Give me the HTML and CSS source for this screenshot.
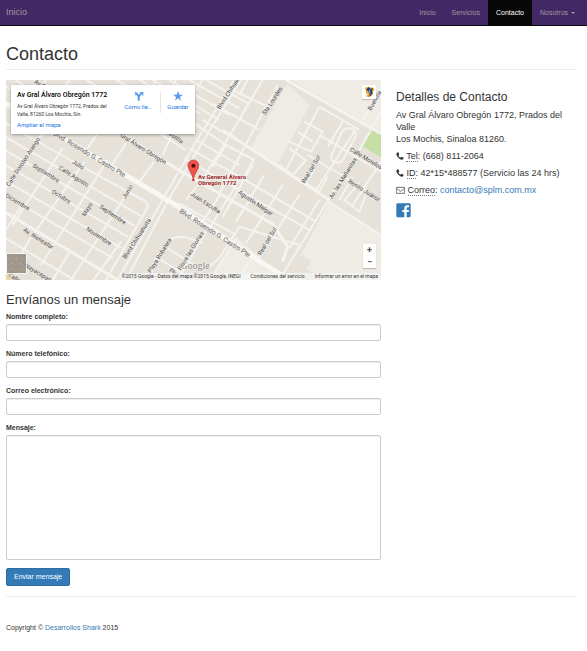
FILE: index.html
```html
<!DOCTYPE html>
<html lang="es">
<head>
<meta charset="utf-8">
<meta name="viewport" content="width=device-width, initial-scale=1">
<title>Contacto</title>
<link rel="stylesheet" href="styles.css">
</head>
<body>
<nav class="navbar">
  <a class="brand" href="#">Inicio</a>
  <ul class="nav-list">
    <li><a href="#">Inicio</a></li>
    <li><a href="#">Servicios</a></li>
    <li><a class="active" href="#">Contacto</a></li>
    <li><a href="#">Nosotros <span class="caret"></span></a></li>
  </ul>
</nav>
<main class="container">
  <h1>Contacto</h1>
  <div class="columns">
    <div class="main-col">
      <div class="map">
        <svg class="map-canvas" viewBox="0 0 1125 600" preserveAspectRatio="xMidYMid slice" aria-hidden="true">
          <rect width="1125" height="600" fill="#e6e2da"/>
          <g fill="#efece6">
            <path d="M855 0H1125V152L1098 140Z"/>
            <path d="M842 12L912 75L812 258L733 206Z"/>
            <path d="M967 370L1125 465V600H845Z"/>
            <path d="M690 470L840 600H610Z"/>
          </g>
          <path d="M870 545l20-20 25 18-12 24 35 20-8 13h-80z" fill="#e6e2da"/>
          <path d="M1098 148L1125 163V232L1068 198Z" fill="#c5dfa5"/>
          <path d="M0 578L40 600H0Z" fill="#e8d9a8"/>
          <g class="roads minor">
            <path d="M0 130L160 222L375 340L415 362Q430 372 422 387L300 600"/>
            <path d="M0 171L405 408M0 212L385 437M0 256L365 470M0 303L345 503M0 347L322 535"/>
            <path d="M0 475L205 600M0 520L130 600M0 75L95 135"/>
            <path d="M130 150L95 175L0 325M170 205L20 435M235 245L70 480L25 560M305 240L105 555M378 318L195 600M345 485L262 600M45 380L0 450M195 510L140 600"/>
            <path d="M275 160L232 222M360 190L310 268M445 245L398 308M345 160L290 130M460 160L540 210M500 160L470 225"/>
            <path d="M0 20L60 60M30 0L90 40M120 0L85 70M240 0L290 28M190 0L170 30M330 0L500 95M400 0L580 100M440 0L640 120M490 0L670 105M550 0L700 85M600 0L730 72"/>
            <path d="M450 0L425 45M510 0L485 40M560 20L530 65M590 0L565 38"/>
            <path d="M770 0L645 210L580 310M815 15L695 240L640 340M725 0L700 45M795 85L670 25M760 150L620 70M735 205L590 120M700 255L570 180"/>
            <path d="M565 130L660 195L745 240M550 205L700 290L930 425M535 235L690 325L910 450M700 440L880 495M520 370L690 465"/>
            <path d="M645 340L590 425M700 300L610 445M740 255L650 410M775 285L690 425M830 315L720 490M880 345L755 540M940 360L850 505M700 440L640 535L610 560"/>
            <path d="M600 285L540 360M660 195L620 260M745 235L705 310"/>
            <path d="M940 80L1060 150M940 80L840 270M875 155L920 185M895 125L950 155L915 215L850 185M850 205L900 240L860 285L820 255M940 165L1125 275M905 225L1080 330M1010 125L965 200M1045 155L930 330M1125 245L1040 375"/>
            <path d="M982 215Q965 240 990 248Q1010 250 1018 226L1045 176Q1058 150 1032 145Q1015 140 1003 165Z"/>
            <path d="M925 270L900 310L940 335L965 290M1040 290L1000 360M1060 310L1015 360L1060 395L1080 345"/>
            <path d="M1125 20L1070 120M1125 95L1092 155L1060 210L967 360L820 600M967 365L1125 465"/>
            <path d="M430 600L450 535L485 485Q510 462 550 475L590 490M485 505L565 555M465 540L530 580M600 455L515 600M735 540L690 600M690 475L625 580"/>
          </g>
          <g class="roads medium">
            <path d="M12 405L335 600M0 398L12 405M280 120L510 265L800 432L845 500L830 545"/>
            <path d="M840 0L1098 145L1125 160M650 150L840 275L970 360"/>
            <path d="M335 600L475 350L575 178L685 0M360 600L490 355L590 185L705 0" class="double"/>
          </g>
          <path class="boulevard" d="M0 70L120 145L370 292L510 375L740 530L850 600"/>
          <g class="street-names">
            <text transform="translate(140 164) rotate(31)" class="large">Blvd. Rosendo G. Castro Pte</text>
            <text transform="translate(519 397) rotate(33)" class="large">Blvd. Rosendo G. Castro Pte</text>
            <text transform="translate(341 169) rotate(32)">Gral Álvaro Obregón</text>
            <text transform="translate(10 320) rotate(-57)">Calle Doroteo Arango</text>
            <text transform="translate(78 260) rotate(32)">Septiembre</text>
            <text transform="translate(197 249) rotate(32)">Julio</text>
            <text transform="translate(157 267) rotate(32)">Calle Agosto</text>
            <text transform="translate(136 338) rotate(32)">Octubre</text>
            <text transform="translate(-3 350) rotate(31)">Diciembre</text>
            <text transform="translate(279 383) rotate(34)">Septiembre</text>
            <text transform="translate(239 450) rotate(33)">Noviembre</text>
            <text transform="translate(50 453) rotate(32)">Av. Bienestar</text>
            <text transform="translate(237 410) rotate(-58)">Mayo</text>
            <text transform="translate(358 357) rotate(-58)">Junio</text>
            <text transform="translate(359 538) rotate(-57)">Blvrd Chihuahuita</text>
            <text transform="translate(434 580) rotate(-58)">Playa Robalera</text>
            <text transform="translate(524 572) rotate(-58)">Playa las Glorias</text>
            <text transform="translate(642 89) rotate(-57)">Blvrd Chihuahuita</text>
            <text transform="translate(778 106) rotate(-57)">Sta Lourdes</text>
            <text transform="translate(1095 93) rotate(-61)">Buendía</text>
            <text transform="translate(896 311) rotate(-59)">Real del Sol</text>
            <text transform="translate(765 527) rotate(-59)">Real del Sol</text>
            <text transform="translate(979 357) rotate(-58)">Av. las Mañanitas</text>
            <text transform="translate(1030 212) rotate(31)">Calle Morelos</text>
            <text transform="translate(1025 307) rotate(32)">Benito Juárez</text>
            <text transform="translate(695 340) rotate(34)">Agustín Melgar</text>
            <text transform="translate(552 345) rotate(33)">Juan Escutia</text>
            <text transform="translate(477 158) rotate(34)">Castilla</text>
            <text transform="translate(55 560) rotate(31)">Nayacapan</text>
            <text transform="translate(5 588) rotate(31)">Calle U</text>
            <text transform="translate(83 8) rotate(31)">Av C</text>
            <text transform="translate(488 573) rotate(40)">Pla</text>
          </g>
          <text x="523" y="567" class="google">Google</text>
          <path d="M562 302C560 279 546 271 546 256A16 16 0 0 1 578 256C578 271 564 279 562 302Z" fill="#ef5348" stroke="#b9352d" stroke-width="2"/>
          <circle cx="562" cy="257" r="6" fill="#4d0d0b"/>
          <circle cx="562" cy="300" r="4" fill="#d93c35"/>
          <g class="place"><text x="576" y="297">Av General Álvaro</text><text x="576" y="315">Obregón 1772</text></g>
          <rect x="1" y="520" width="61" height="61" fill="#fff"/>
          <rect x="3" y="522" width="57" height="57" fill="#a0978b"/>
          <path d="M6 535l9 5 8-10 10 8 12-6 10 9M5 555l14-7 9 8 16-9 13 10M10 571l12-6 14 7 18-7M32 530v18M18 549v20M46 546v22" fill="none" stroke="#b2a99c" stroke-width="3" stroke-dasharray="4 5"/>
        </svg>
        <div class="map-card">
          <div class="map-place">
            <strong>Av Gral Álvaro Obregón 1772</strong>
            <p>Av Gral Álvaro Obregón 1772, Prados del Valle, 81260 Los Mochis, Sin.</p>
            <a href="#">Ampliar el mapa</a>
          </div>
          <a class="map-action wide" href="#">
            <svg viewBox="0 0 30 30" aria-hidden="true"><path d="M14 29V19Q14 14 8 8M14 19Q15 12 22 9" fill="none" stroke="#5b9cea" stroke-width="6"/><path d="M2 2L13 7L5 15ZM16 3H28V15Z" fill="#5b9cea"/></svg>
            Cómo lle...
          </a>
          <a class="map-action divided" href="#">
            <svg viewBox="0 0 30 30" aria-hidden="true"><path d="M15 0L19 11H30L21 18L24 29L15 22L6 29L9 18L0 11H11Z" fill="#5b9cea"/></svg>
            Guardar
          </a>
        </div>
        <button class="map-user" type="button" aria-label="Cuenta">
          <svg viewBox="0 0 36 36" aria-hidden="true"><path d="M5 7Q12 1 19 4L32 5L34 13L29 17Q32 25 24 31Q15 36 8 29L16 27Q7 23 9 13Z" fill="#f5a623"/><path d="M17 3L22 8L30 7L27 12Q31 20 25 27L17 32L21 24Q14 20 16 13L9 14L12 8Z" fill="#173c7c"/><path d="M21 11Q17 17 23 22" fill="none" stroke="#fff" stroke-width="2"/></svg>
        </button>
        <div class="map-zoom">
          <button type="button" aria-label="Acercar">+</button>
          <button type="button" aria-label="Alejar">−</button>
        </div>
        <div class="map-credits">
          <span>©2015 Google - Datos del mapa ©2015 Google, INEGI</span>
          <a href="#">Condiciones del servicio</a>
          <a href="#">Informar un error en el mapa</a>
        </div>
      </div>
      <h3>Envíanos un mensaje</h3>
      <form class="contact-form">
        <div class="field"><label for="name">Nombre completo:</label><input id="name" type="text"></div>
        <div class="field"><label for="phone">Número telefónico:</label><input id="phone" type="tel"></div>
        <div class="field"><label for="email">Correo electrónico:</label><input id="email" type="email"></div>
        <div class="field"><label for="message">Mensaje:</label><textarea id="message"></textarea></div>
        <button class="submit" type="submit">Enviar mensaje</button>
      </form>
    </div>
    <aside class="details">
      <h3>Detalles de Contacto</h3>
      <p>Av Gral Álvaro Obregón 1772, Prados del Valle<br>Los Mochis, Sinaloa 81260.</p>
      <p><svg class="icon" viewBox="0 0 24 24" aria-hidden="true"><path d="M1 5Q3 1 7 1L10 8L7 11Q10 15 13 17L16 14L23 17Q23 22 19 23Q14 24 7 17Q0 10 1 5Z" fill="#333"/></svg> <abbr title="Teléfono">Tel</abbr>: (668) 811-2064</p>
      <p><svg class="icon" viewBox="0 0 24 24" aria-hidden="true"><path d="M1 5Q3 1 7 1L10 8L7 11Q10 15 13 17L16 14L23 17Q23 22 19 23Q14 24 7 17Q0 10 1 5Z" fill="#333"/></svg> <abbr title="Radio">ID</abbr>: 42*15*488577 (Servicio las 24 hrs)</p>
      <p><svg class="icon mail" viewBox="0 0 27 24" aria-hidden="true"><path d="M1 4H26V22H1ZM2 8L13 16L25 8" fill="none" stroke="#333" stroke-width="2"/></svg> <abbr title="Correo electrónico">Correo</abbr>: <a href="#">contacto@splm.com.mx</a></p>
      <a class="social" href="#" aria-label="Facebook"><svg viewBox="0 0 45 45" aria-hidden="true"><path d="M5 1H40Q44 1 44 5V38Q44 43 40 43H32V27H38L39 21H32V17Q32 13 36 13H39V7H34Q25 7 25 15V21H19V27H25V43H5Q1 43 1 38V5Q1 1 5 1Z" fill="#337ab7"/></svg></a>
    </aside>
  </div>
  <footer>Copyright © <a href="#">Desarrollos Shark</a> 2015</footer>
</main>
</body>
</html>
```
FILE: styles.css
```css
* { box-sizing: border-box; }
body {
  margin: 0;
  background: #fff;
  color: #333;
  font-family: "Liberation Sans", Arial, sans-serif;
  font-size: 9px;
  line-height: 12px;
}
a { color: #337ab7; text-decoration: none; }
h1, h3, p, ul { margin: 0; font-weight: 400; }

.navbar {
  display: flex;
  justify-content: space-between;
  height: 26px;
  padding: 0 4px 0 6px;
  background: #432866;
  border-bottom: 1px solid #080808;
}
.navbar a { color: #9d9d9d; line-height: 25px; }
.brand { font-size: 9px; }
.nav-list { display: flex; padding: 0; list-style: none; font-size: 7px; }
.nav-list a { display: block; padding: 0 8px; }
.navbar .active { background: #080808; color: #fff; }
.caret {
  display: inline-block;
  margin-left: 1px;
  vertical-align: middle;
  border: 2px solid transparent;
  border-top-color: currentColor;
  border-bottom: 0;
}

.container { padding: 18px 11px 0 6px; }
h1 {
  margin-bottom: 10px;
  padding-bottom: 5px;
  border-bottom: 1px solid #eee;
  font-size: 18px;
  line-height: 20px;
}
h3 { font-size: 12px; line-height: 14px; }
.columns {
  display: grid;
  grid-template-columns: minmax(0, 25fr) minmax(0, 12fr);
  gap: 15px;
}

.map { position: relative; height: 200px; overflow: hidden; font-family: Roboto, sans-serif; }
.map-canvas { display: block; width: 100%; height: 100%; }
.roads { fill: none; stroke: #f5f3ef; stroke-linejoin: round; }
.minor { stroke-width: 6px; }
.medium { stroke-width: 9px; }
.double { stroke-width: 6px; }
.boulevard { fill: none; stroke: #f8f7f3; stroke-width: 15px; }
.street-names { fill: #444; stroke: #f1eee9; stroke-width: 2px; paint-order: stroke; font-size: 18px; }
.large { font-size: 20px; fill: #666; }
.google { font: 30px "Liberation Serif", serif; fill: #8b8b8b; stroke: #f5f3ef; stroke-width: 3px; paint-order: stroke; }
.place { fill: #9b1c1c; stroke: #f5f3ef; stroke-width: 3px; paint-order: stroke; font-size: 18px; font-weight: 700; }
.map-card {
  position: absolute;
  top: 5px;
  left: 5px;
  display: flex;
  width: 184px;
  height: 49px;
  padding: 6px 0 0 6px;
  background: #fff;
  box-shadow: 0 1px 3px rgba(0, 0, 0, .35);
  font-size: 5px;
  line-height: 8px;
}
.map-place { flex: 1; min-width: 0; }
.map-card strong { display: block; margin-bottom: 3px; color: #000; font-size: 7px; font-weight: 500; white-space: nowrap; }
.map-place p { margin-bottom: 0; font-size: 5px; }
.map-place a, .map-action { display: block; color: #1a73e8; font-size: 6px; }
.map-place a { padding-top: 3px; }
.map-action { width: 35px; height: 22px; text-align: center; white-space: nowrap; }
.map-action.wide { width: 43px; }
.map-action svg { display: block; width: 10px; height: 10px; margin: 0 auto 2px; }
.divided { border-left: 1px solid #e5e5e5; }
.map button { padding: 0; border: 0; background: #fff; }
.map .map-user {
  position: absolute;
  top: 5px;
  right: 5px;
  width: 14px;
  height: 14px;
  padding: 1px;
  border-radius: 1px;
  box-shadow: 0 1px 1px rgba(0, 0, 0, .2);
}
.map-user svg { display: block; width: 12px; height: 12px; }
.map-zoom {
  position: absolute;
  right: 5px;
  bottom: 12px;
  display: grid;
  width: 13px;
  height: 24px;
  background: #fff;
  box-shadow: 0 1px 1px rgba(0, 0, 0, .2);
}
.map-zoom button { color: #555; font: 700 9px/12px Roboto, sans-serif; }
.map-credits {
  position: absolute;
  right: 0;
  bottom: 0;
  display: flex;
  gap: 10px;
  padding: 0 3px 0 1px;
  background: rgba(245, 245, 245, .8);
  color: #333;
  font-size: 5px;
  line-height: 7px;
  white-space: nowrap;
}
.map-credits a { color: #333; }

.main-col h3 { margin: 13px 0 5px; font-size: 13px; }
.field { margin-bottom: 8px; }
.field label { display: block; margin-bottom: 2px; font-size: 7px; font-weight: 700; line-height: 10px; }
.field input, .field textarea {
  display: block;
  width: 100%;
  height: 17px;
  padding: 3px 6px;
  border: 1px solid #ccc;
  border-radius: 2px;
  background: #fff;
  box-shadow: inset 0 1px 1px rgba(0, 0, 0, .075);
  font: inherit;
}
.field textarea { height: 125px; margin-bottom: 7px; resize: none; }
.submit {
  display: block;
  padding: 3px 7px;
  border: 1px solid #2e6da4;
  border-radius: 2px;
  background: #337ab7;
  color: #fff;
  font: 7px/10px "Liberation Sans", Arial, sans-serif;
}

.details { padding-top: 10px; }
.details h3 { margin-bottom: 5px; }
.details p { margin-bottom: 5px; }
abbr { border-bottom: 1px dotted #777; text-decoration: none; }
.icon { width: 8px; height: 8px; vertical-align: -1px; }
.mail { width: 9px; }
.social { display: block; width: 15px; padding-top: 2px; }
.social svg { display: block; width: 15px; height: 15px; }
footer {
  margin-top: 10px;
  padding: 26px 0;
  border-top: 1px solid #eee;
  font-size: 7px;
  line-height: 10px;
}
```
